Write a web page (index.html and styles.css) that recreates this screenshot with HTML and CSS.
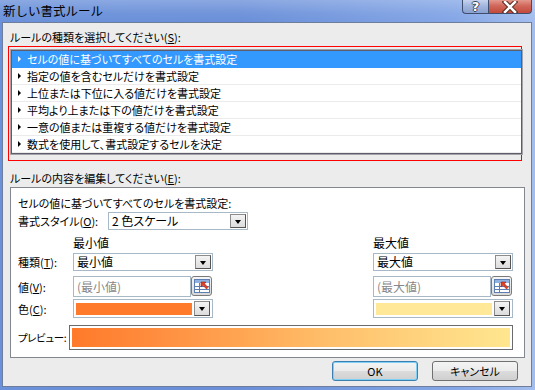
FILE: index.html
```html
<!DOCTYPE html>
<html lang="ja">
<head>
<meta charset="utf-8">
<title>新しい書式ルール</title>
<link rel="stylesheet" href="styles.css">
</head>
<body>
<div class="window">
  <div class="titlebar">
    <span class="title">新しい書式ルール</span>
    <div class="caption-btns">
      <div class="cbtn help">?</div>
      <div class="cbtn close">
        <svg width="16" height="12" viewBox="0 0 16 12"><path d="M3 1 L13 11 M13 1 L3 11" stroke="#5a2a20" stroke-width="4.5" stroke-linecap="square"/><path d="M3 1 L13 11 M13 1 L3 11" stroke="#ffffff" stroke-width="2.5" stroke-linecap="square"/></svg>
      </div>
    </div>
  </div>
  <div class="client">
    <div class="label l1">ルールの種類を選択してください(<u>S</u>):</div>
    <div class="redbox">
      <ul class="rulelist">
        <li class="sel">セルの値に基づいてすべてのセルを書式設定</li>
        <li>指定の値を含むセルだけを書式設定</li>
        <li>上位または下位に入る値だけを書式設定</li>
        <li>平均より上または下の値だけを書式設定</li>
        <li>一意の値または重複する値だけを書式設定</li>
        <li>数式を使用して、書式設定するセルを決定</li>
      </ul>
    </div>
    <div class="label l2">ルールの内容を編集してください(<u>E</u>):</div>
    <div class="panel">
      <div class="desc">セルの値に基づいてすべてのセルを書式設定:</div>
      <div class="style-row">
        <span class="slbl">書式スタイル(<u>O</u>):</span>
        <div class="combo"><span class="ctext">2 色スケール</span><span class="arrow"></span></div>
      </div>
      <div class="frow heads">
        <span></span><span class="head">最小値</span><span></span><span class="head">最大値</span>
      </div>
      <div class="frow r-type">
        <span class="flbl">種類(<u>T</u>):</span>
        <div class="combo"><span class="ctext">最小値</span><span class="arrow"></span></div>
        <span></span>
        <div class="combo"><span class="ctext">最大値</span><span class="arrow"></span></div>
      </div>
      <div class="frow r-val">
        <span class="flbl">値(<u>V</u>):</span>
        <div class="valbox"><span class="input">(最小値)</span><span class="refbtn"><svg width="16" height="14" viewBox="0 0 16 14"><rect x="0.5" y="0.5" width="15" height="13" fill="#fff" stroke="#5b7fb5"/><rect x="1" y="1" width="14" height="3" fill="#8fb2e0"/><path d="M1 7.5 H15 M1 10.5 H15 M5.5 4 V13" stroke="#5b7fb5" stroke-width="1"/><path d="M7 3 L12 3 L10.5 4.8 L14 8.5 L12.5 10 L9 6.3 L7 8 Z" fill="#e04028" stroke="#a02010" stroke-width="0.6"/></svg></span></div>
        <span></span>
        <div class="valbox"><span class="input">(最大値)</span><span class="refbtn"><svg width="16" height="14" viewBox="0 0 16 14"><rect x="0.5" y="0.5" width="15" height="13" fill="#fff" stroke="#5b7fb5"/><rect x="1" y="1" width="14" height="3" fill="#8fb2e0"/><path d="M1 7.5 H15 M1 10.5 H15 M5.5 4 V13" stroke="#5b7fb5" stroke-width="1"/><path d="M7 3 L12 3 L10.5 4.8 L14 8.5 L12.5 10 L9 6.3 L7 8 Z" fill="#e04028" stroke="#a02010" stroke-width="0.6"/></svg></span></div>
      </div>
      <div class="frow r-color">
        <span class="flbl">色(<u>C</u>):</span>
        <div class="combo color"><span class="swatch orange"></span><span class="arrow"></span></div>
        <span></span>
        <div class="combo color"><span class="swatch yellow"></span><span class="arrow"></span></div>
      </div>
      <div class="preview-row">
        <span class="plbl">プレビュー:</span>
        <div class="preview"><div class="grad"></div></div>
      </div>
    </div>
    <div class="buttons">
      <div class="btn default">OK</div>
      <div class="btn">キャンセル</div>
    </div>
  </div>
</div>
</body>
</html>
```
FILE: styles.css
```css
html, body {
  margin: 0;
  padding: 0;
}
body {
  width: 535px;
  height: 390px;
  overflow: hidden;
  font-family: "Noto Sans CJK JP", "Noto Sans", sans-serif;
  font-size: 11px;
  font-feature-settings: "palt";
  color: #000;
}
.window {
  width: 535px;
  height: 390px;
  background: linear-gradient(to right, #6a91da 0%, #6a8fd8 45%, #84a6e6 85%, #a3beee 100%);
  display: flex;
  flex-direction: column;
}
.titlebar {
  height: 22px;
  display: flex;
  align-items: flex-start;
  background: linear-gradient(to bottom, rgba(255,255,255,0.22) 0%, rgba(255,255,255,0.05) 60%, rgba(255,255,255,0) 100%);
}
.title {
  margin: 3px 0 0 3px;
  font-size: 12.5px;
  line-height: 15px;
  font-feature-settings: normal;
}
.caption-btns {
  margin-left: auto;
  margin-right: 3px;
  display: flex;
}
.cbtn {
  height: 13px;
  border: 1px solid #404e6e;
  border-top: none;
  display: flex;
  align-items: center;
  justify-content: center;
}
.help {
  width: 25px;
  border-radius: 0 0 0 4px;
  border-right: none;
  background: linear-gradient(to bottom, #c5d3ee 0%, #9fb3dc 50%, #8aa2d2 100%);
  color: #fff;
  font-family: "DejaVu Sans", sans-serif;
  font-weight: bold;
  font-size: 13px;
  line-height: 13px;
  text-shadow: 1px 0 0 #39475f, -1px 0 0 #39475f, 0 1px 0 #39475f, 0 -1px 0 #39475f;
}
.close {
  width: 42px;
  border-radius: 0 0 4px 0;
  background: linear-gradient(to bottom, #e3998c 0%, #d0675a 45%, #c24a3c 100%);
}
.client {
  margin: 0 3px 0 2px;
  height: 363px;
  background: #ececec;
  border: 1px solid #6f7d9c;
  display: flex;
  flex-direction: column;
}
.label {
  line-height: 14px;
  height: 14px;
  margin-left: 7px;
}
.l1 { margin-top: 7px; }
.l2 { margin-top: 10px; }
.redbox {
  margin: 2px 0 0 5px;
  width: 514px;
  height: 115px;
  border: 1px solid #ff0000;
  padding: 2px 0 0 1px;
  box-sizing: border-box;
}
.rulelist {
  list-style: none;
  margin: 0;
  padding: 0;
  width: 513px;
  box-sizing: border-box;
  border: 1px solid #a4a4a8;
  box-shadow: inset 0 0 0 1px #5d5d6b;
  padding: 1px;
  background: #fff;
}
.rulelist li {
  height: 16px;
  line-height: 16px;
  border-bottom: 1px solid #ebebeb;
  padding-left: 15px;
  position: relative;
}
.rulelist li::before {
  content: "";
  position: absolute;
  left: 6px;
  top: 5px;
  border-left: 3px solid #000;
  border-top: 3px solid transparent;
  border-bottom: 3px solid transparent;
}
.rulelist li.sel {
  background: #3399ff;
  color: #fff;
  border-bottom-color: #3399ff;
}
.rulelist li.sel::before {
  border-left-color: #fff;
}
.panel {
  margin: 2px 0 0 7px;
  width: 515px;
  height: 171px;
  box-sizing: border-box;
  border: 1px solid #828790;
  background: #fff;
  padding: 8px 11px 0 7px;
}
.desc {
  height: 14px;
  line-height: 14px;
}
.style-row {
  margin-top: 2px;
  display: flex;
  align-items: center;
  height: 18px;
}
.slbl { width: 90px; line-height: 14px; flex-shrink: 0; }
.combo {
  width: 140px;
  height: 18px;
  box-sizing: border-box;
  border: 1px solid #a7b8c6;
  background: #fff;
  display: flex;
  align-items: center;
  padding-left: 3px;
  position: relative;
}
.ctext { line-height: 14px; font-size: 12px; }
.arrow {
  margin-left: auto;
  margin-right: 1px;
  width: 16px;
  height: 14px;
  box-sizing: border-box;
  border: 1px solid #8c8c8c;
  border-right-color: #555;
  border-bottom-color: #555;
  background: linear-gradient(to bottom, #f4f4f4 0%, #dcdcdc 100%);
  position: relative;
  flex-shrink: 0;
}
.arrow::after {
  content: "";
  position: absolute;
  left: 4px;
  top: 5px;
  border-top: 4px solid #000;
  border-left: 3.5px solid transparent;
  border-right: 3.5px solid transparent;
}
.frow {
  display: grid;
  grid-template-columns: 55px 140px 1fr 140px;
  align-items: center;
}
.heads { margin-top: 6px; height: 14px; line-height: 14px; }
.head { font-size: 12px; }
.r-type { margin-top: 3px; height: 18px; }
.r-val { margin-top: 5px; height: 21px; }
.r-color { margin-top: 2px; height: 19px; }
.flbl { line-height: 14px; white-space: nowrap; }
.valbox {
  display: flex;
  height: 21px;
}
.input {
  width: 118px;
  box-sizing: border-box;
  border: 1px solid #a7b8c6;
  color: #888;
  padding-left: 3px;
  line-height: 19px;
  font-size: 12px;
}
.refbtn {
  width: 21px;
  height: 20px;
  box-sizing: border-box;
  border: 1px solid #7a7a7a;
  border-radius: 3px;
  background: linear-gradient(to bottom, #f6f6f6, #d8d8d8);
  display: flex;
  align-items: center;
  justify-content: center;
}
.combo.color {
  height: 19px;
  padding-left: 2px;
}
.swatch {
  width: 116px;
  height: 12px;
  flex-shrink: 0;
}
.swatch.orange { background: #ff7a2a; }
.swatch.yellow { background: #ffe898; }
.combo.color .arrow { height: 15px; margin-left: 2px; }
.preview-row {
  margin-top: 7px;
  display: flex;
  align-items: center;
  height: 25px;
}
.plbl {
  width: 51px;
  line-height: 14px;
  white-space: nowrap;
  flex-shrink: 0;
  font-size: 10.5px;
  letter-spacing: -0.4px;
}
.preview {
  width: 444px;
  height: 25px;
  box-sizing: border-box;
  border: 1px solid #6b6b6b;
  padding: 2px;
  background: #fff;
  flex-shrink: 0;
}
.grad {
  height: 19px;
  background: linear-gradient(to right, #ff7a2a 0%, #ff8c3e 18%, #ffa552 38%, #ffbe6a 58%, #ffd27d 78%, #ffe68f 100%);
}
.buttons {
  margin-top: 3px;
  display: flex;
  justify-content: flex-end;
  gap: 14px;
  padding-right: 13px;
}
.btn {
  width: 86px;
  height: 20px;
  box-sizing: border-box;
  border: 1px solid #707070;
  border-radius: 3px;
  background: linear-gradient(to bottom, #f4f4f4 0%, #ebebeb 50%, #dcdcdc 51%, #cfcfcf 100%);
  display: flex;
  align-items: center;
  justify-content: center;
  line-height: 14px;
}
.btn.default {
  border-color: #3c7fb1;
  box-shadow: inset 0 0 0 1px #7fd0f5;
}
```
